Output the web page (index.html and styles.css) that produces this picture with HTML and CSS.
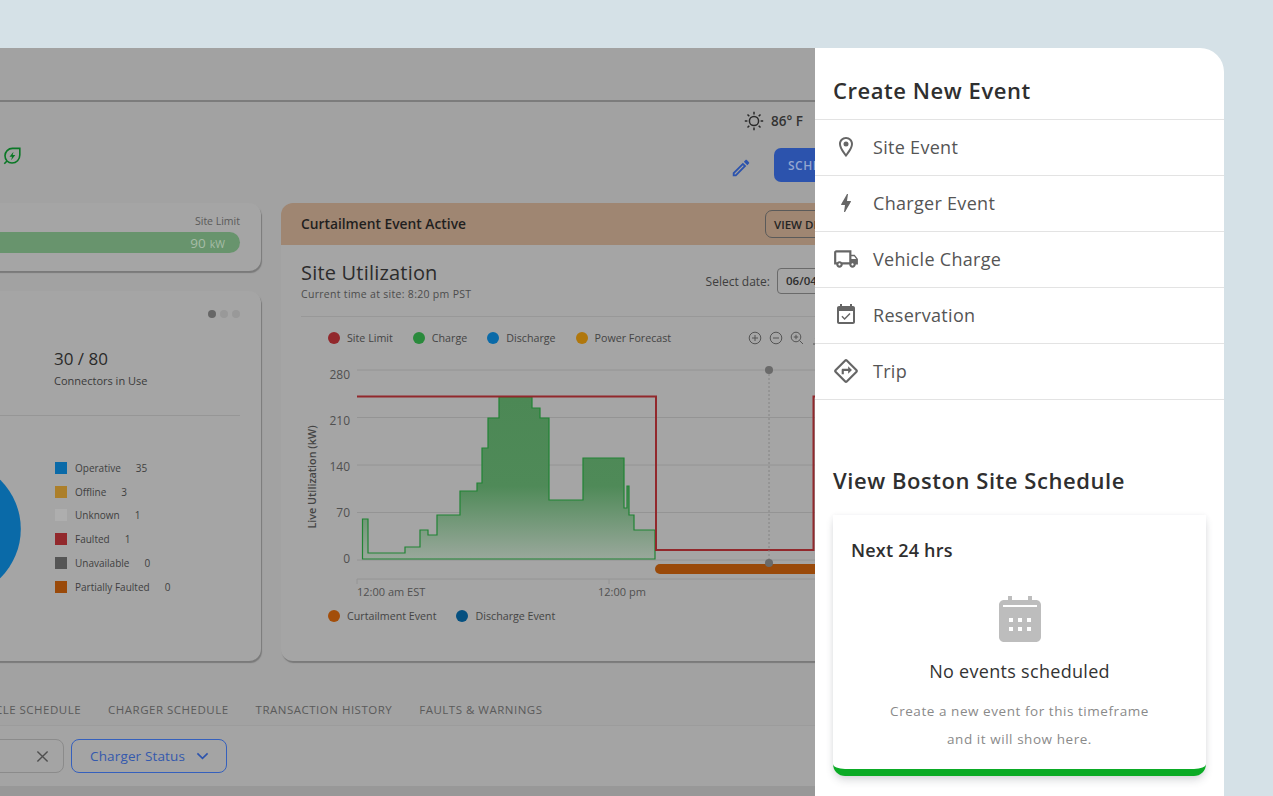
FILE: index.html
```html
<!DOCTYPE html>
<html lang="en">
<head>
  <meta charset="UTF-8">
  <title>Boston Site Dashboard</title>
  <link rel="stylesheet" href="styles.css">
</head>
<body>
  <div class="frame">
    <!-- Dimmed dashboard behind the panel -->
    <main class="dash">
      <div class="dash-top"></div>
      <div class="weather">
        <svg class="sun" viewBox="0 0 20 20"><circle cx="10" cy="10" r="4.6"/><path d="M10 .8v2.6M10 16.6v2.6M.8 10h2.6M16.6 10h2.6M3.500 3.500l1.800 1.800M14.700 14.700l1.800 1.800M3.500 16.500l1.800-1.800M14.700 5.300l1.800-1.800"/></svg>
        <span>86° F</span>
      </div>
      <div class="actions">
        <svg class="leaf" viewBox="0 0 18 18"><path class="leaf-line" d="M16.800 1.400H9.500C5.200 1.400 2 4.800 2 8.800c0 4.200 3 7.200 7 7.200 4.500 0 7.800-3.500 7.800-8zM1.300 16.800 4 14"/><path class="leaf-bolt" d="M10.500 4.800 6.500 9.800H9l-.8 3.400 4.100-5.200H9.700z"/></svg>
        <svg class="pencil" viewBox="0 0 24 24"><path d="M3 17.250V21h3.750L17.810 9.940l-3.750-3.750L3 17.250zM5.920 19H5v-.92l9.060-9.060.92.92L5.920 19zM20.710 7.040c.39-.39.39-1.020 0-1.410l-2.340-2.340c-.39-.39-1.020-.39-1.410 0l-1.830 1.830 3.750 3.750 1.830-1.830z"/></svg>
        <button class="btn-schedule">SCHEDULE</button>
      </div>

      <div class="dash-grid">
        <div class="col-left">
          <section class="card limit-card">
            <div class="limit-label">Site Limit</div>
            <div class="limit-bar"><span class="limit-num">90</span> <span class="limit-unit">kW</span></div>
          </section>

          <section class="card charger-card">
            <div class="pager"><i class="on"></i><i></i><i></i></div>
            <div class="stat">
              <div class="stat-num">30 / 80</div>
              <div class="stat-label">Connectors in Use</div>
            </div>
            <div class="card-line"></div>
            <div class="status-row">
              <svg class="donut" viewBox="0 0 75 146"><circle cx="-28" cy="73" r="68.8"/></svg>
              <ul class="status-list">
                <li><i class="sq sq-blue"></i>Operative<b>35</b></li>
                <li><i class="sq sq-yellow"></i>Offline<b>3</b></li>
                <li><i class="sq sq-grey"></i>Unknown<b>1</b></li>
                <li><i class="sq sq-red"></i>Faulted<b>1</b></li>
                <li><i class="sq sq-dark"></i>Unavailable<b>0</b></li>
                <li><i class="sq sq-orange"></i>Partially Faulted<b>0</b></li>
              </ul>
            </div>
          </section>
        </div>

        <section class="card util-card">
          <div class="banner">
            <span>Curtailment Event Active</span>
            <button class="btn-details">VIEW DETAILS</button>
          </div>
          <div class="util-head">
            <div>
              <h2>Site Utilization</h2>
              <p>Current time at site: 8:20 pm PST</p>
            </div>
            <div class="date-pick">
              <label>Select date:</label>
              <div class="date-input">06/04/2024</div>
            </div>
          </div>
          <div class="util-line"></div>
          <div class="chart-legend">
            <span class="key"><i class="dot dot-red"></i>Site Limit</span>
            <span class="key"><i class="dot dot-green"></i>Charge</span>
            <span class="key"><i class="dot dot-blue"></i>Discharge</span>
            <span class="key"><i class="dot dot-amber"></i>Power Forecast</span>
            <div class="chart-tools">
              <svg viewBox="0 0 14 14"><circle cx="7" cy="7" r="5.800"/><path d="M7 4v6M4 7h6"/></svg>
              <svg viewBox="0 0 14 14"><circle cx="7" cy="7" r="5.800"/><path d="M4 7h6"/></svg>
              <svg viewBox="0 0 14 14"><circle cx="6" cy="6" r="4.800"/><path d="M6 3.800v4.400M3.800 6h4.400M9.500 9.500l3.500 3.500"/></svg>
              <svg viewBox="0 0 14 14"><path d="M7 2v8M4 7l3 3.500 3-3.500M2 13h10"/></svg>
            </div>
          </div>
          <svg class="chart" viewBox="301 352 576 248">
            <defs>
              <linearGradient id="chargeFill" x1="0" y1="397" x2="0" y2="559" gradientUnits="userSpaceOnUse">
                <stop offset="0" stop-color="#4c8855"/>
                <stop offset="0.55" stop-color="#4f8a58"/>
                <stop offset="1" stop-color="#9aa89c"/>
              </linearGradient>
            </defs>
            <g class="grid-lines">
              <path d="M357 370H877M357 417.500H877M357 465H877M357 512.500H877M357 560H877M357 579H877"/>
              <path d="M357 579v5M609 579v5"/>
            </g>
            <g class="y-labels">
              <text x="350" y="379">280</text>
              <text x="350" y="425">210</text>
              <text x="350" y="471">140</text>
              <text x="350" y="517">70</text>
              <text x="350" y="563">0</text>
            </g>
            <text class="y-title" transform="translate(316 477) rotate(-90)">Live Utilization (kW)</text>
            <path class="charge" d="M362.500 559V519H368V553H405V547H420V530H428V535H437V515H460V491H477V483H482V448H488V418H499V397H532V408H540V418H549V500H583V458H624V508H627V486H629V515H634V530H655V559Z"/>
            <path class="limit" d="M357 396.500H656V550H813.500V396.500H877"/>
            <rect class="curtail" x="655" y="564" width="222" height="10" rx="5"/>
            <path class="marker-line" d="M769 370V563"/>
            <circle class="marker" cx="769" cy="370" r="4"/>
            <circle class="marker" cx="769" cy="563" r="4"/>
            <text class="x-label" x="357" y="596">12:00 am EST</text>
            <text class="x-label" x="598" y="596">12:00 pm</text>
          </svg>
          <div class="event-legend">
            <span class="key"><i class="dot dot-orange"></i>Curtailment Event</span>
            <span class="key"><i class="dot dot-navy"></i>Discharge Event</span>
          </div>
        </section>
      </div>

      <nav class="tabs">
        <span>VEHICLE SCHEDULE</span>
        <span>CHARGER SCHEDULE</span>
        <span>TRANSACTION HISTORY</span>
        <span>FAULTS &amp; WARNINGS</span>
      </nav>
      <div class="filters">
        <div class="search">
          <svg viewBox="0 0 14 14"><path d="M1.500 1.500l11 11M12.500 1.500l-11 11"/></svg>
        </div>
        <button class="btn-status">Charger Status
          <svg viewBox="0 0 14 8"><path d="M1.500 1.200 7 6.500l5.500-5.300"/></svg>
        </button>
      </div>
      <div class="table-head"></div>
    </main>

    <!-- Create event panel -->
    <aside class="panel">
      <h2 class="panel-title">Create New Event</h2>
      <ul class="event-list">
        <li>
          <span class="ev-icon"><svg viewBox="0 0 24 24"><path d="M12 2C8.130 2 5 5.130 5 9c0 5.250 7 13 7 13s7-7.750 7-13c0-3.870-3.130-7-7-7zM7 9c0-2.760 2.240-5 5-5s5 2.240 5 5c0 2.880-2.880 7.190-5 9.880C9.920 16.210 7 11.850 7 9z"/><circle cx="12" cy="9" r="2.500"/></svg></span>
          <span>Site Event</span>
        </li>
        <li>
          <span class="ev-icon"><svg viewBox="0 0 24 24"><path d="M11 21h-1l1-7H7.500c-.58 0-.57-.32-.38-.66.19-.34.05-.08.07-.12C8.480 10.940 10.420 7.540 13 3h1l-1 7h3.500c.49 0 .56.330.47.510l-.07.150C12.960 17.550 11 21 11 21z"/></svg></span>
          <span>Charger Event</span>
        </li>
        <li>
          <span class="ev-icon ev-wide"><svg viewBox="0 0 24 24"><path d="M20 8h-3V4H3c-1.100 0-2 .9-2 2v11h2c0 1.660 1.340 3 3 3s3-1.340 3-3h6c0 1.660 1.340 3 3 3s3-1.340 3-3h2v-5l-3-4zm-.5 1.500l1.960 2.500H17V9.500h2.500zM6 18c-.55 0-1-.45-1-1s.45-1 1-1 1 .45 1 1-.45 1-1 1zm2.220-3c-.55-.61-1.330-1-2.220-1s-1.670.39-2.220 1H3V6h12v9H8.220zM18 18c-.55 0-1-.45-1-1s.45-1 1-1 1 .45 1 1-.45 1-1 1z"/></svg></span>
          <span>Vehicle Charge</span>
        </li>
        <li>
          <span class="ev-icon"><svg viewBox="0 0 24 24"><path d="M16.530 11.060L15.470 10l-4.880 4.880-2.120-2.120-1.060 1.060L10.590 17l5.940-5.940zM19 3h-1V1h-2v2H8V1H6v2H5c-1.110 0-1.990.9-1.990 2L3 19c0 1.100.89 2 2 2h14c1.100 0 2-.9 2-2V5c0-1.100-.9-2-2-2zm0 16H5V8h14v11z"/></svg></span>
          <span>Reservation</span>
        </li>
        <li>
          <span class="ev-icon ev-wide"><svg viewBox="0 0 24 24"><path d="M22.430 10.590l-9.010-9.010c-.75-.75-2.070-.76-2.830 0l-9 9c-.78.78-.78 2.040 0 2.820l9 9c.39.39.9.58 1.410.58.51 0 1.020-.19 1.410-.58l8.990-8.990c.79-.76.8-2.020.03-2.820zm-10.420 10.400l-9-9 9-9 9 9-9 9zM8 11v4h2v-3h4v2.500l3.500-3.500L14 7.500V10H9c-.55 0-1 .45-1 1z"/></svg></span>
          <span>Trip</span>
        </li>
      </ul>

      <h2 class="schedule-title">View Boston Site Schedule</h2>
      <div class="schedule-card">
        <h3>Next 24 hrs</h3>
        <svg class="cal" viewBox="0 0 42 46"><path fill-rule="evenodd" d="M9 0h4v4h16V0h4v4h4c2.800 0 5 2.200 5 5v32c0 2.800-2.200 5-5 5H5c-2.800 0-5-2.200-5-5V9c0-2.800 2.200-5 5-5h4zM4 9v2h34V9zM10 22v4h4v-4zm9 0v4h4v-4zm9 0v4h4v-4zM10 31v4h4v-4zm9 0v4h4v-4zm9 0v4h4v-4z"/></svg>
        <div class="empty-title">No events scheduled</div>
        <p class="empty-text">Create a new event for this timeframe<br>and it will show here.</p>
      </div>
    </aside>
  </div>
</body>
</html>
```

FILE: styles.css
```css
* {
  box-sizing: border-box;
}
html, body {
  height: 100%;
}
body {
  margin: 0;
  padding-top: 48px;
  background: #d5e1e7;
  font-family: "Open Sans", sans-serif;
  color: #2b2b2b;
  overflow: hidden;
}
h2, h3, p, ul {
  margin: 0;
  padding: 0;
}
ul {
  list-style: none;
}
i {
  display: block;
}
button {
  font-family: inherit;
  cursor: pointer;
}
.frame {
  display: flex;
  width: 1224px;
  height: 748px;
  border-top-right-radius: 24px;
  overflow: hidden;
}

/* Dashboard */
.dash {
  flex: 0 0 815px;
  width: 815px;
  background: #a2a2a2;
  overflow: hidden;
}
.dash-top {
  height: 54px;
  border-bottom: 2px solid #7c7c7c;
}
.weather {
  display: flex;
  justify-content: flex-end;
  align-items: center;
  gap: 7px;
  height: 38px;
  padding-right: 12px;
  font-size: 13.5px;
  font-weight: 600;
  color: #333;
}
.sun {
  width: 20px;
  height: 20px;
  margin-left: -1px;
  fill: none;
  stroke: #2a2a2a;
  stroke-width: 1.5;
}
.actions {
  display: flex;
  align-items: center;
  height: 34px;
  margin-top: 8px;
  padding-left: 3px;
}
.leaf {
  width: 18px;
  height: 18px;
  margin-right: auto;
  margin-top: -18px;
}
.leaf-line {
  fill: none;
  stroke: #0a7826;
  stroke-width: 1.6;
}
.leaf-bolt {
  fill: #0a7826;
}
.pencil {
  width: 22px;
  height: 22px;
  margin: 6px -1px 0 1px;
  fill: #2c53ad;
}
.btn-schedule {
  flex: 0 0 130px;
  height: 34px;
  margin: 0 -89px 0 23px;
  padding: 0 0 0 14px;
  border: none;
  border-radius: 7px;
  background: #2c53ad;
  color: #94a6cf;
  font-size: 12px;
  font-weight: 600;
  letter-spacing: .5px;
  text-align: left;
}
.dash-grid {
  display: grid;
  grid-template-columns: 301px 616px;
  gap: 20px;
  width: 937px;
  height: 458px;
  margin: 21px 0 0 -40px;
}
.card {
  background: #a5a5a5;
  border-radius: 12px;
  box-shadow: 1px 2px 1px #7a7a7a;
}
.col-left {
  display: flex;
  flex-direction: column;
  gap: 20px;
}
.limit-card {
  height: 68px;
  padding: 11px 21px 0 20px;
}
.limit-label {
  font-size: 10.5px;
  line-height: 14px;
  text-align: right;
  color: #5a5a5a;
}
.limit-bar {
  height: 21px;
  margin-top: 4px;
  padding-right: 15px;
  border-radius: 0 11px 11px 0;
  background: #68946d;
  color: #a6bca7;
  line-height: 21px;
  text-align: right;
}
.limit-num {
  font-size: 13.5px;
}
.limit-unit {
  font-size: 10.5px;
}
.charger-card {
  flex: 1;
  padding: 19px 21px 0 20px;
}
.pager {
  display: flex;
  justify-content: flex-end;
  gap: 4px;
}
.pager i {
  width: 8px;
  height: 8px;
  border-radius: 50%;
  background: #999;
}
.pager i.on {
  background: #666;
}
.stat {
  margin-top: 30px;
  padding-left: 74px;
}
.stat-num {
  font-size: 17px;
  line-height: 22px;
  font-weight: 500;
  color: #2a2a2a;
}
.stat-label {
  margin-top: 3px;
  font-size: 11px;
  line-height: 16px;
  color: #3a3a3a;
}
.card-line {
  height: 1px;
  margin-top: 26px;
  background: #969696;
}
.status-row {
  display: flex;
  margin-top: 40px;
}
.donut {
  flex: 0 0 75px;
  width: 75px;
  height: 146px;
  fill: #0a6aa8;
}
.status-list li {
  display: flex;
  align-items: center;
  height: 23.8px;
  font-size: 10px;
  color: #3f3f3f;
}
.status-list b {
  margin-left: 15px;
  font-weight: 400;
}
.sq {
  width: 12px;
  height: 12px;
  margin-right: 8px;
}
.sq-blue { background: #0a6aa8; }
.sq-yellow { background: #ac7f2a; }
.sq-grey { background: #aeaeae; }
.sq-red { background: #92282c; }
.sq-dark { background: #555; }
.sq-orange { background: #9a4a0a; }

.util-card {
  padding: 0 20px;
}
.banner {
  display: flex;
  justify-content: space-between;
  align-items: center;
  height: 42px;
  margin: 0 -20px;
  padding: 0 20px 1px;
  border-radius: 12px 12px 0 0;
  background: #9f8672;
  font-size: 13.8px;
  font-weight: 600;
  color: #1f1f1f;
}
.btn-details {
  width: 112px;
  height: 28px;
  margin-top: 1px;
  padding: 0 0 0 8px;
  border: 1px solid #5a5a5a;
  border-radius: 7px;
  background: none;
  color: #242424;
  font-size: 11.5px;
  font-weight: 600;
  text-align: left;
}
.util-head {
  display: flex;
  justify-content: space-between;
  height: 71px;
  padding-top: 14px;
}
.util-head h2 {
  font-size: 20px;
  line-height: 27px;
  font-weight: 400;
  letter-spacing: .2px;
  color: #2c2c2c;
}
.util-head p {
  font-size: 10.5px;
  line-height: 16px;
  letter-spacing: .3px;
  color: #4c4c4c;
}
.date-pick {
  display: flex;
  align-items: center;
  gap: 7px;
  height: 26px;
  margin-top: 9px;
  font-size: 12px;
  color: #3e3e3e;
}
.date-input {
  width: 100px;
  height: 26px;
  padding-left: 8px;
  border: 1px solid #6a6a6a;
  border-radius: 4px;
  font-size: 11.5px;
  font-weight: 600;
  line-height: 24px;
  color: #2d2d2d;
  white-space: nowrap;
  overflow: hidden;
}
.util-line {
  height: 1px;
  background: #989898;
}
.chart-legend {
  display: flex;
  align-items: center;
  gap: 20px;
  height: 26px;
  margin-top: 8px;
  margin-bottom: 1px;
  padding-left: 27px;
}
.key {
  display: flex;
  align-items: center;
  gap: 7px;
  font-size: 10.7px;
  color: #444;
}
.dot {
  width: 12px;
  height: 12px;
  border-radius: 50%;
}
.dot-red { background: #92282c; }
.dot-green { background: #2a8a3c; }
.dot-blue { background: #0a6aa8; }
.dot-amber { background: #b0770c; }
.dot-orange { background: #a34e0a; }
.dot-navy { background: #055080; }
.chart-tools {
  display: flex;
  gap: 7px;
  margin-left: auto;
  margin-right: 52px;
}
.chart-tools svg {
  width: 14px;
  height: 14px;
  fill: none;
  stroke: #555;
  stroke-width: 1;
}
.chart {
  display: block;
  width: 576px;
  height: 248px;
  font-family: "Open Sans", sans-serif;
}
.grid-lines path {
  fill: none;
  stroke: #949494;
  stroke-width: 1;
}
.y-labels text {
  font-size: 12px;
  fill: #505050;
  text-anchor: end;
}
.y-title {
  font-size: 10.8px;
  font-weight: 600;
  fill: #444;
  text-anchor: middle;
}
.x-label {
  font-size: 11px;
  fill: #505050;
}
.charge {
  fill: url(#chargeFill);
  stroke: #218434;
  stroke-width: 1.2;
}
.limit {
  fill: none;
  stroke: #92282c;
  stroke-width: 2;
}
.curtail {
  fill: #9a4a0a;
}
.marker-line {
  fill: none;
  stroke: #848484;
  stroke-dasharray: 2 2;
}
.marker {
  fill: #6a6a6a;
}
.event-legend {
  display: flex;
  gap: 20px;
  margin-top: 9px;
  padding-left: 27px;
}

/* Tabs and filters below the cards */
.tabs {
  display: flex;
  gap: 27px;
  align-items: center;
  height: 32px;
  margin: 32px 0 0 -32px;
  font-size: 11.5px;
  letter-spacing: .5px;
  color: #5a5a5a;
  white-space: nowrap;
}
.filters {
  display: flex;
  align-items: center;
  gap: 7px;
  height: 61px;
  border-top: 1px solid #9c9c9c;
  background: #a4a4a4;
}
.search {
  display: flex;
  align-items: center;
  justify-content: flex-end;
  width: 65px;
  height: 34px;
  margin-left: -1px;
  padding-right: 14px;
  border: 1px solid #8b8b8b;
  border-radius: 0 8px 8px 0;
}
.search svg {
  width: 13px;
  height: 13px;
  fill: none;
  stroke: #4f4f4f;
  stroke-width: 1.5;
}
.btn-status {
  display: flex;
  align-items: center;
  gap: 11px;
  width: 156px;
  height: 34px;
  padding: 0 0 0 18px;
  border: 1px solid #3560bd;
  border-radius: 8px;
  background: none;
  color: #3459ad;
  font-size: 13.5px;
  letter-spacing: .15px;
}
.btn-status svg {
  width: 13px;
  height: 8px;
  fill: none;
  stroke: #2c53ad;
  stroke-width: 1.7;
}
.table-head {
  height: 10px;
  background: #989898;
}

/* Side panel */
.panel {
  flex: 1;
  background: #fff;
  overflow: hidden;
}
.panel-title {
  height: 72px;
  padding: 27px 18px 0;
  border-bottom: 1px solid #e3e3e3;
  font-size: 22px;
  line-height: 30px;
  font-weight: 600;
  letter-spacing: .55px;
  color: #2f2f2f;
}
.event-list li {
  display: flex;
  align-items: center;
  height: 56px;
  padding: 0 0 1px 18px;
  border-bottom: 1px solid #e3e3e3;
  font-size: 18px;
  letter-spacing: .3px;
  color: #555;
}
.ev-icon {
  display: flex;
  justify-content: center;
  width: 26px;
  margin-right: 14px;
}
.ev-icon svg {
  width: 24px;
  height: 24px;
  fill: #666;
}
.ev-wide svg {
  width: 28px;
  height: 28px;
}
.schedule-title {
  margin-top: 63px;
  padding: 0 18px;
  font-size: 22px;
  line-height: 34px;
  font-weight: 600;
  letter-spacing: .55px;
  color: #2f2f2f;
}
.schedule-card {
  height: 261px;
  margin: 18px 18px 0;
  padding: 21px 18px 0;
  border-bottom: 7px solid #0bab25;
  border-radius: 0 0 12px 12px;
  box-shadow: 0 5px 8px -1px rgba(60, 70, 80, .2), 0 0 5px rgba(60, 70, 80, .06);
  text-align: center;
}
.schedule-card h3 {
  font-size: 18px;
  line-height: 28px;
  font-weight: 600;
  letter-spacing: .2px;
  color: #2f2f2f;
  text-align: left;
}
.cal {
  display: block;
  width: 42px;
  height: 46px;
  margin: 32px auto 0;
  fill: #bdbdbd;
}
.empty-title {
  margin-top: 16px;
  font-size: 18px;
  line-height: 26px;
  letter-spacing: .3px;
  color: #333;
}
.empty-text {
  margin-top: 13px;
  font-size: 13.5px;
  line-height: 28px;
  letter-spacing: .55px;
  color: #8a8a8a;
}
```
